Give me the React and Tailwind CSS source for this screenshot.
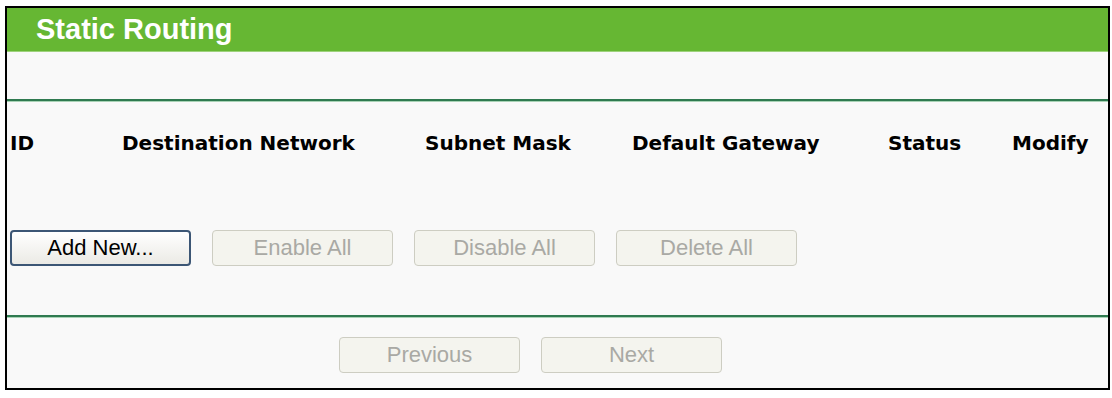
export default function App() {
  const cols = [
    { label: "ID", w: "w-[112px]" },
    { label: "Destination Network", w: "w-[303px]" },
    { label: "Subnet Mask", w: "w-[207px]" },
    { label: "Default Gateway", w: "w-[256px]" },
    { label: "Status", w: "w-[124px]" },
    { label: "Modify", w: "w-[80px]" },
  ];
  const btnBase =
    "h-[36px] w-[181px] rounded-[4px] text-[22px] flex items-center justify-center leading-none";
  const disabled =
    btnBase + " border border-[#cdcdc2] bg-[#f4f4ee] text-[#a9a9a4]";
  return (
    <div
      className="w-[1112px] h-[398px] bg-white pt-[6px] pl-[5px]"
      style={{ fontFamily: '"Liberation Sans", Arial, sans-serif' }}
    >
      <div className="w-[1105px] h-[384px] border-2 border-black bg-[#f9f9f9] flex flex-col">
        <div className="h-[44px] bg-[#66b733] flex items-center pl-[29px] border-b border-[#9ed27c]">
          <span className="text-white font-bold text-[29px] leading-none">
            Static Routing
          </span>
        </div>
        <div className="h-[47px]" />
        <div className="h-[3px] border-t-2 border-[#2f7a50] border-b border-b-[#a9d3b6]" />
        <div
          className="flex items-center h-[80px] pl-[3px] pt-[2px]"
          style={{ fontFamily: '"DejaVu Sans", Verdana, sans-serif' }}
        >
          {cols.map((c) => (
            <div key={c.label} className={c.w + " font-bold text-[20px] text-black whitespace-nowrap leading-none"}>
              {c.label}
            </div>
          ))}
        </div>
        <div className="h-[48px]" />
        <div className="flex gap-[21px] pl-[3px]">
          <button className={btnBase + " border-2 border-[#3c5675] bg-gradient-to-b from-white to-[#ebeae5] text-black"}>
            Add New...
          </button>
          <button className={disabled}>Enable All</button>
          <button className={disabled}>Disable All</button>
          <button className={disabled}>Delete All</button>
        </div>
        <div className="h-[49px]" />
        <div className="h-[3px] border-t-2 border-[#2f7a50] border-b border-b-[#a9d3b6]" />
        <div className="flex gap-[21px] pl-[332px] pt-[19px]">
          <button className={disabled}>Previous</button>
          <button className={disabled}>Next</button>
        </div>
      </div>
    </div>
  );
}
